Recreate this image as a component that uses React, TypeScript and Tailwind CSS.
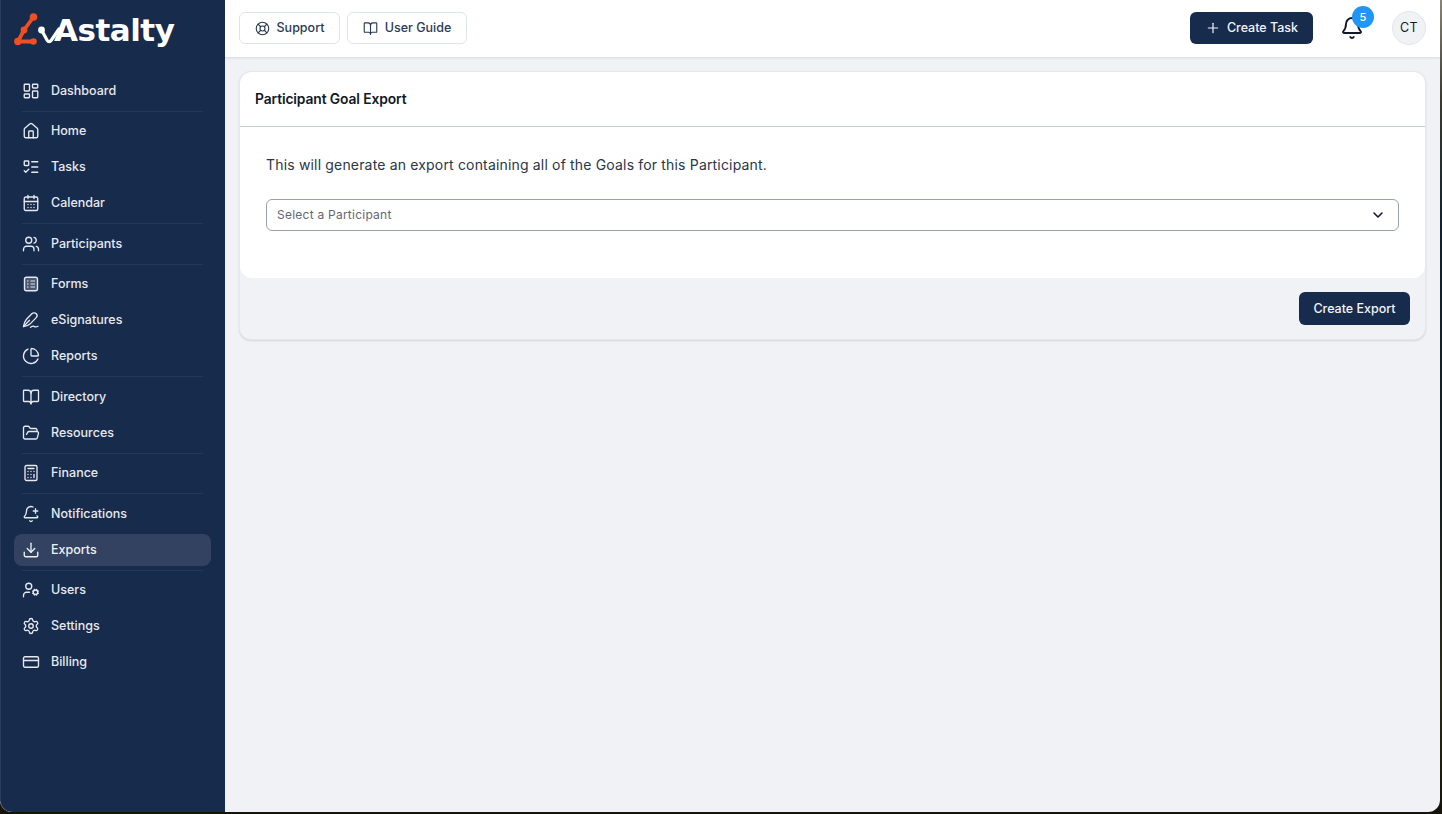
import React from "react";
import {
  LayoutDashboard, House, ListTodo, CalendarDays, Users, ChartPie, BookOpen,
  FolderOpen, Calculator, BellPlus, Download, UserCog, Settings, CreditCard, LifeBuoy,
  Plus, Bell, ChevronDown,
} from "lucide-react";

function FormsIcon() {
  return (
    <svg width={18} height={18} viewBox="0 0 18 18" fill="none" stroke="currentColor">
      <rect x="2.5" y="2.2" width="13" height="13.6" rx="2" strokeWidth="1.4" fill="#ffffff" fillOpacity="0.22" />
      <path d="M5 6h1.5M8.5 6H13M5 9h1.5M8.5 9H13M5 12h1.5M8.5 12H13" strokeWidth="1.2" />
    </svg>
  );
}

function PenIcon() {
  return (
    <svg width={18} height={18} viewBox="0 0 18 18" fill="none" stroke="currentColor" strokeWidth="1.3" strokeLinecap="round" strokeLinejoin="round">
      <path d="M1.5 15.5 C2 12.5 3 10 4.5 8.3 L9.8 2.8 C11 1.6 13.2 1.5 14.3 2.7 C15.4 3.9 15.2 5.7 14 6.9 L8.6 12.4 C6.6 14.2 4 15.2 1.5 15.5 Z" />
      <path d="M1.5 15.5 L7.5 9.3" />
      <path d="M8.5 16.3 C10 15.4 11 14.8 12 15.4 C13 16 14.2 16.2 16 15.2" />
    </svg>
  );
}

type Item = { label: string; icon: React.ComponentType<any>; active?: boolean };
const groups: Item[][] = [
  [{ label: "Dashboard", icon: LayoutDashboard }],
  [
    { label: "Home", icon: House },
    { label: "Tasks", icon: ListTodo },
    { label: "Calendar", icon: CalendarDays },
  ],
  [{ label: "Participants", icon: Users }],
  [
    { label: "Forms", icon: FormsIcon },
    { label: "eSignatures", icon: PenIcon },
    { label: "Reports", icon: ChartPie },
  ],
  [
    { label: "Directory", icon: BookOpen },
    { label: "Resources", icon: FolderOpen },
  ],
  [{ label: "Finance", icon: Calculator }],
  [
    { label: "Notifications", icon: BellPlus },
    { label: "Exports", icon: Download, active: true },
  ],
  [
    { label: "Users", icon: UserCog },
    { label: "Settings", icon: Settings },
    { label: "Billing", icon: CreditCard },
  ],
];

function Logo() {
  return (
    <div className="flex items-start h-[50px] pl-[13px] pt-[9px]">
      <svg width="46" height="40" viewBox="0 0 46 40" className="shrink-0" fill="none">
        <path d="M19.5 8 L10 21 L4 32.5 L19 32.5" stroke="#f04e23" strokeWidth="3.8" strokeLinecap="round" strokeLinejoin="round" />
        <circle cx="19.5" cy="8" r="3.8" fill="#f04e23" />
        <circle cx="10" cy="21" r="3.4" fill="#f04e23" />
        <circle cx="3.8" cy="32.5" r="3.7" fill="#f04e23" />
        <circle cx="19.5" cy="32.5" r="3.3" fill="#f04e23" />
        <circle cx="27.5" cy="21" r="3.4" fill="#ffffff" />
        <path d="M27.5 21 L33 31 Q35 34.5 37.5 31 L45 20" stroke="#ffffff" strokeWidth="3.2" strokeLinecap="round" />
      </svg>
      <span className="-ml-[6px] mt-[1px] text-[31px] leading-[40px] font-bold text-white font-['DejaVu_Sans',sans-serif] -tracking-[0.5px]">
        Astalty
      </span>
    </div>
  );
}

function NavRow({ item }: { item: Item }) {
  const Icon = item.icon;
  return (
    <div
      className={
        item.active
          ? "flex items-center h-[32px] rounded-lg bg-[#334260] pl-[8px] gap-[11px] text-[12.5px] font-medium text-[#eef0f4]"
          : "flex items-center h-[32px] rounded-lg pl-[8px] gap-[11px] text-[12.5px] font-medium text-[#e6e9ef]"
      }
    >
      <span className="w-[18px] h-[18px] flex items-center justify-center shrink-0">
        <Icon size={18} strokeWidth={1.8} />
      </span>
      <span>{item.label}</span>
    </div>
  );
}

function Sidebar() {
  return (
    <aside className="w-[225px] shrink-0 bg-[#172b4d] border-l border-[#2a3c5c] rounded-bl-xl flex flex-col">
      <Logo />
      <nav className="mt-[24.9px] pl-[13px] pr-[14px]">
        {groups.map((group, i) => (
          <div key={i}>
            <div className="flex flex-col gap-[4px]">
              {group.map((item) => (
                <NavRow key={item.label} item={item} />
              ))}
            </div>
            {i < groups.length - 1 && <div className="h-px bg-[#25385a] ml-[8px] mr-[8px] mt-[4px] mb-[3.5px]" />}
          </div>
        ))}
      </nav>
    </aside>
  );
}

function TopBar() {
  return (
    <header className="h-[58px] shrink-0 bg-white border-b border-[#dfe1e6] shadow-[0_1px_2px_rgba(0,0,0,0.05)] flex items-start pt-[12px] pl-[14px] pr-[14px]">
      <div className="flex items-center gap-[7px]">
        <button className="h-[32px] w-[101px] rounded-md border border-[#dfe3eb] bg-white flex items-center justify-center gap-[7px] text-[12.5px] font-medium text-[#2b3a55]">
          <LifeBuoy size={15} strokeWidth={1.8} />
          Support
        </button>
        <button className="h-[32px] w-[120px] rounded-md border border-[#dfe3eb] bg-white flex items-center justify-center gap-[7px] text-[12.5px] font-medium text-[#2b3a55]">
          <BookOpen size={15} strokeWidth={1.8} />
          User Guide
        </button>
      </div>
      <div className="ml-auto -mt-[1px] flex items-center">
        <button className="h-[32px] w-[123px] rounded-md bg-[#172b4d] flex items-center justify-center gap-[6px] text-[12.5px] font-medium text-[#f2f4f7]">
          <Plus size={16} strokeWidth={1.8} />
          Create Task
        </button>
        <div className="relative ml-[27px] w-[24px] h-[24px] text-[#111827]">
          <Bell size={24} strokeWidth={1.9} />
          <span className="absolute -top-[10px] left-[12px] w-[22px] h-[22px] rounded-full bg-[#2196f3] text-white text-[11px] font-medium flex items-center justify-center">
            5
          </span>
        </div>
        <div className="ml-[28px] w-[34px] h-[34px] rounded-full bg-[#f0f2f5] border border-[#e3e6ec] flex items-center justify-center text-[12.5px] font-normal text-[#111827] tracking-[0.3px]">
          CT
        </div>
      </div>
    </header>
  );
}

function Card() {
  return (
    <section className="rounded-xl bg-[#f0f2f5] border border-[#e6e8ec] shadow-[0_1px_2px_rgba(0,0,0,0.12)]">
      <div className="bg-white rounded-xl">
        <div className="h-[55px] flex items-center pl-[15px] border-b border-[#c9ced6] text-[13.8px] font-semibold text-[#111827] -tracking-[0.1px]">
          Participant Goal Export
        </div>
        <div className="px-[26px] pt-[28px] pb-[47px]">
          <p className="text-[14px] leading-[20px] text-[#2b3648] tracking-[0.17px]">
            This will generate an export containing all of the Goals for this Participant.
          </p>
          <div className="mt-[24px] h-[32px] rounded-md border border-[#9aa1ae] flex items-center justify-between pl-[10px] pr-[12px]">
            <span className="text-[12px] text-[#5f6775] tracking-[0.24px]">Select a Participant</span>
            <ChevronDown size={16} strokeWidth={2.4} className="text-[#111827]" />
          </div>
        </div>
      </div>
      <div className="h-[61px] flex items-center justify-end pr-[15px]">
        <button className="h-[33px] w-[111px] rounded-md bg-[#172b4d] pt-[1px] text-[12.5px] font-medium text-[#f2f4f7]">
          Create Export
        </button>
      </div>
    </section>
  );
}

export default function App() {
  return (
    <div className="w-[1442px] h-[814px] overflow-hidden bg-[linear-gradient(to_bottom,#8a8378_0%,#3a3a30_12%,#10202c_28%,#141d20_60%,#2a2a16_85%,#15130a_100%)] font-['Inter',sans-serif]">
      <div className="w-[1440px] h-[812px] flex overflow-hidden rounded-b-xl bg-[#f0f2f5]">
        <Sidebar />
        <main className="flex-1 min-w-0 flex flex-col">
          <TopBar />
          <div className="pt-[13px] pl-[14px] pr-[14px]">
            <Card />
          </div>
        </main>
      </div>
    </div>
  );
}
